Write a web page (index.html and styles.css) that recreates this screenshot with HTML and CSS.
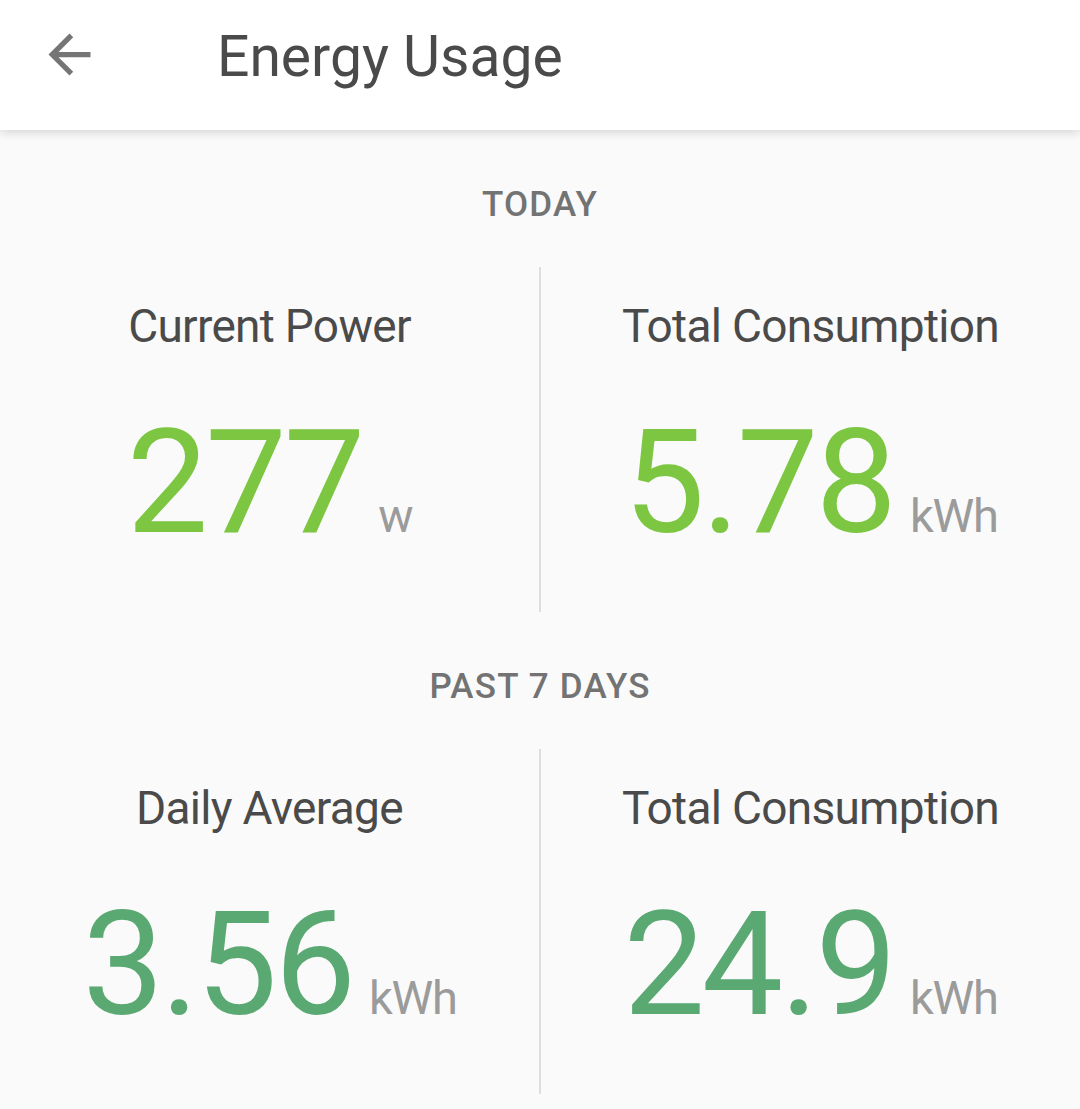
FILE: index.html
```html
<html>
<head>
  <meta http-equiv="Content-type" content="text/html;charset=UTF-8">
  <meta name="viewport" content="width=device-width, initial-scale=1.0"/>
  <title>Energy Usage</title>
  <link rel="stylesheet" href="styles.css">
</head>
<body>
  <div id="header">
    <div class="back">
      <svg viewBox="0 0 24 24" width="63" height="63">
        <path d="M20 11H7.83l5.59-5.59L12 4l-8 8 8 8 1.41-1.41L7.83 13H20v-2z" fill="#757575"/>
      </svg>
    </div>
    <div class="title">Energy Usage</div>
  </div>

  <div id="mainbody">
    <div class="section">
      <div class="sectionTitle">TODAY</div>
      <div class="row">
        <div class="stat">
          <div class="label">Current Power</div>
          <div class="value today">277<span class="unit">w</span></div>
        </div>
        <div class="divider"></div>
        <div class="stat">
          <div class="label">Total Consumption</div>
          <div class="value today">5.78<span class="unit">kWh</span></div>
        </div>
      </div>
    </div>

    <div class="section">
      <div class="sectionTitle">PAST 7 DAYS</div>
      <div class="row">
        <div class="stat">
          <div class="label">Daily Average</div>
          <div class="value week">3.56<span class="unit">kWh</span></div>
        </div>
        <div class="divider"></div>
        <div class="stat">
          <div class="label">Total Consumption</div>
          <div class="value week">24.9<span class="unit">kWh</span></div>
        </div>
      </div>
    </div>
  </div>
</body>
</html>
```

FILE: styles.css
```css
body{
    margin:0;
    background:#fafafa;
    font-family: Roboto, "Liberation Sans", sans-serif;
    overflow:hidden;
}
#header{
    background:white;
    height:130px;
    box-sizing:border-box;
    padding-left:38px;
    padding-bottom:17px;
    display:flex;
    align-items:center;
    box-shadow: 0 2px 10px rgba(0,0,0,0.16);
    position:relative;
}
#header .back{
    width:63px;
    height:63px;
    margin-top:-5px;
}
#header .back svg{
    display:block;
}
#header .title{
    margin-left:116px;
    font-size:57px;
    line-height:1;
    color:#4a4a4a;
}
#mainbody{
    width:100%;
}
.section{
    padding-top:57px;
}
.sectionTitle{
    text-align:center;
    font-size:35px;
    line-height:1;
    font-weight:500;
    letter-spacing:1.2px;
    color:#737373;
}
.row{
    margin-top:45px;
    display:grid;
    grid-template-columns: 1fr 2px 1fr;
}
.divider{
    background:#dedede;
}
.stat{
    text-align:center;
    padding-top:36px;
    padding-bottom:57px;
}
.label{
    font-size:46px;
    line-height:1;
    letter-spacing:-0.7px;
    color:#4a4a4a;
}
.value{
    margin-top:61px;
    font-size:145px;
    line-height:1;
    letter-spacing:-3px;
}
.today{
    color:#7cc642;
}
.week{
    color:#5aa872;
}
.unit{
    font-size:47px;
    letter-spacing:-1.3px;
    color:#9b9b9b;
    margin-left:16px;
}
```
